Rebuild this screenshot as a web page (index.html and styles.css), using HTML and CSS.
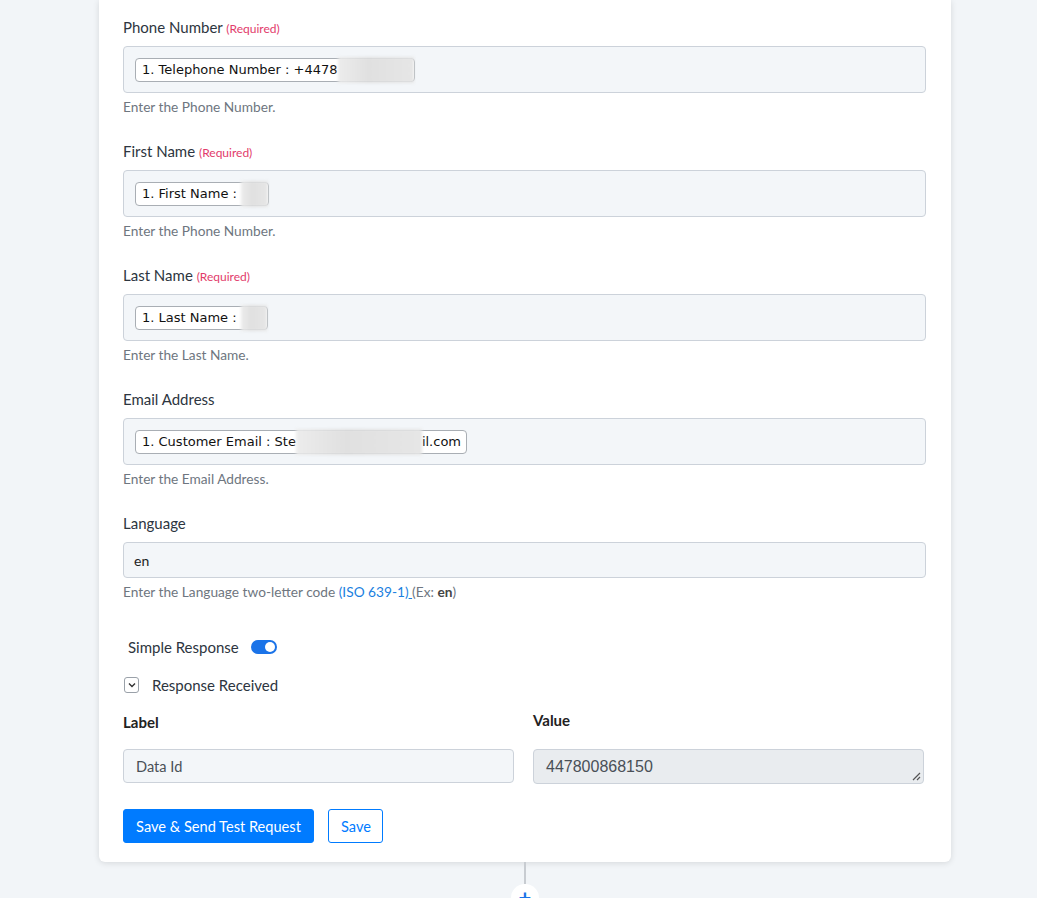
FILE: index.html
```html
<!DOCTYPE html>
<html lang="en">
<head>
    <meta charset="UTF-8">
    <meta name="viewport" content="width=device-width, initial-scale=1.0">
    <title>Action Step - Send SMS</title>
    <link rel="stylesheet" href="styles.css">
</head>
<body>
    <div class="page">
        <div class="step-card">
            <!-- Phone Number -->
            <div class="field">
                <div class="field-label">Phone Number <span class="required">(Required)</span></div>
                <div class="map-box">
                    <span class="map-tag">1. Telephone Number : +4478<span class="masked" style="width: 76px;"></span></span>
                </div>
                <div class="field-help">Enter the Phone Number.</div>
            </div>

            <!-- First Name -->
            <div class="field">
                <div class="field-label">First Name <span class="required">(Required)</span></div>
                <div class="map-box">
                    <span class="map-tag">1. First Name : <span class="masked" style="width: 27px;"></span></span>
                </div>
                <div class="field-help">Enter the Phone Number.</div>
            </div>

            <!-- Last Name -->
            <div class="field">
                <div class="field-label">Last Name <span class="required">(Required)</span></div>
                <div class="map-box">
                    <span class="map-tag">1. Last Name : <span class="masked" style="width: 26px;"></span></span>
                </div>
                <div class="field-help">Enter the Last Name.</div>
            </div>

            <!-- Email Address -->
            <div class="field">
                <div class="field-label">Email Address</div>
                <div class="map-box">
                    <span class="map-tag">1. Customer Email : Ste<span class="masked" style="width: 126px;"></span><span class="tag-tail">il.com</span></span>
                </div>
                <div class="field-help">Enter the Email Address.</div>
            </div>

            <!-- Language -->
            <div class="field">
                <div class="field-label">Language</div>
                <div class="text-box">en</div>
                <div class="field-help">Enter the Language two-letter code <a href="#" class="help-link">(ISO 639-1)<u> </u></a>(Ex: <b>en</b>)</div>
            </div>

            <div class="switch-row">
                <span>Simple Response</span>
                <span class="switch"><span class="switch-knob"></span></span>
            </div>

            <div class="collapse-row">
                <span class="collapse-box">
                    <svg width="8" height="6" viewBox="0 0 8 6"><path d="M1 1.5 L4 4.5 L7 1.5" fill="none" stroke="#333" stroke-width="1.4"/></svg>
                </span>
                <span>Response Received</span>
            </div>

            <div class="response-grid">
                <div class="response-col">
                    <div class="col-head">Label</div>
                    <div class="response-input">Data Id</div>
                </div>
                <div class="response-col">
                    <div class="col-head">Value</div>
                    <div class="response-input readonly">
                        447800868150
                        <svg class="grip" width="9" height="9" viewBox="0 0 9 9"><path d="M8 1 L1 8 M8 5 L5 8" stroke="#555" stroke-width="1.2"/></svg>
                    </div>
                </div>
            </div>

            <div class="actions">
                <button class="btn btn-primary">Save &amp; Send Test Request</button>
                <button class="btn btn-outline">Save</button>
            </div>
        </div>

        <div class="connector">
            <div class="connector-line"></div>
            <div class="add-step">+</div>
        </div>
    </div>
</body>
</html>
```

FILE: styles.css
```css
body {
    font-family: Lato, "Open Sans", "Liberation Sans", sans-serif;
    margin: 0;
    padding: 0;
    background-color: #f2f5f8;
    color: #333;
    overflow: hidden;
    height: 898px;
}
.page {
    width: 852px;
    margin-left: 99px;
}
.step-card {
    background-color: #ffffff;
    border-radius: 0 0 6px 6px;
    box-shadow: 0 1px 6px rgba(0, 0, 0, 0.12);
    padding: 17px 25px 19px 24px;
}
.field {
    margin-bottom: 26px;
}
.field-label {
    font-size: 15px;
    color: #2d3540;
    height: 20px;
    line-height: 20px;
    margin-bottom: 9px;
}
.required {
    font-size: 12px;
    color: #e23b6b;
}
.map-box {
    height: 45px;
    background-color: #f3f6f9;
    border: 1px solid #ccd2da;
    border-radius: 4px;
    display: flex;
    align-items: center;
    padding-left: 11px;
}
.map-tag {
    display: inline-flex;
    align-items: center;
    height: 22px;
    padding-left: 6px;
    background: #ffffff;
    border: 1px solid #a9aeb4;
    border-radius: 4px;
    font-family: "DejaVu Sans", Verdana, sans-serif;
    font-size: 13px;
    color: #111;
    white-space: pre;
}
/* blurred-out part of a mapped value */
.masked {
    display: inline-block;
    height: 26px;
    background: linear-gradient(90deg, #ececec, #e0e0e0 40%, #e6e6e6);
    filter: blur(1.5px);
}
.tag-tail {
    padding-right: 5px;
}
.field-help {
    font-size: 13.7px;
    color: #6e7680;
    margin-top: 5px;
    line-height: 17px;
}
.text-box {
    height: 34px;
    background-color: #f3f6f9;
    border: 1px solid #ccd2da;
    border-radius: 4px;
    display: flex;
    align-items: center;
    padding-left: 10px;
    font-size: 14px;
    color: #222;
}
.help-link {
    color: #1a7fe0;
    text-decoration: none;
}
.help-link u {
    text-decoration: underline;
}
.field-help b {
    color: #444;
}
.switch-row {
    display: flex;
    align-items: center;
    gap: 12px;
    margin-top: 37px;
    margin-left: 5px;
    font-size: 15px;
    color: #2d3540;
    height: 20px;
}
.switch {
    width: 26px;
    height: 14px;
    border-radius: 7px;
    background-color: #1a73e8;
    position: relative;
}
.switch-knob {
    position: absolute;
    right: 2px;
    top: 2px;
    width: 10px;
    height: 10px;
    border-radius: 50%;
    background: #fff;
}
.collapse-row {
    display: flex;
    align-items: center;
    gap: 13px;
    margin-top: 18px;
    margin-left: 1px;
    font-size: 15px;
    color: #2d3540;
    height: 20px;
}
.collapse-box {
    width: 13px;
    height: 14px;
    border: 1px solid #9aa1a9;
    border-radius: 3px;
    display: flex;
    justify-content: center;
    align-items: center;
}
.response-grid {
    display: grid;
    grid-template-columns: 391px 391px;
    gap: 19px;
    margin-top: 17px;
}
.col-head {
    font-weight: bold;
    font-size: 15px;
    color: #222;
    height: 20px;
    line-height: 20px;
    margin-bottom: 17px;
}
.response-col:nth-child(2) .col-head {
    margin-top: -2px;
    margin-bottom: 19px;
}
.response-input {
    height: 32px;
    border: 1px solid #ccd2da;
    border-radius: 4px;
    background-color: #f3f6f9;
    display: flex;
    align-items: center;
    padding-left: 12px;
    font-size: 14.6px;
    color: #495057;
    position: relative;
}
.response-input.readonly {
    background-color: #e9ecef;
    font-family: "Liberation Sans", Arial, sans-serif;
    font-size: 16px;
    height: 33px;
}
.grip {
    position: absolute;
    right: 2px;
    bottom: 2px;
}
.actions {
    display: flex;
    gap: 14px;
    margin-top: 25px;
}
.btn {
    height: 34px;
    border-radius: 3px;
    font-family: Lato, "Open Sans", sans-serif;
    font-size: 14.6px;
    padding: 0 12px;
    cursor: pointer;
}
.btn-primary {
    background-color: #007bff;
    border: 1px solid #007bff;
    color: #fff;
    width: 191px;
}
.btn-outline {
    background-color: #fff;
    border: 1px solid #007bff;
    color: #007bff;
    width: 55px;
}
.connector {
    display: flex;
    flex-direction: column;
    align-items: center;
}
.connector-line {
    width: 2px;
    height: 22px;
    background-color: #c8ccd1;
}
.add-step {
    width: 28px;
    height: 28px;
    border-radius: 50%;
    background: #fff;
    color: #1a73e8;
    font-size: 22px;
    font-weight: bold;
    display: flex;
    justify-content: center;
    align-items: center;
    line-height: 1;
}
```
